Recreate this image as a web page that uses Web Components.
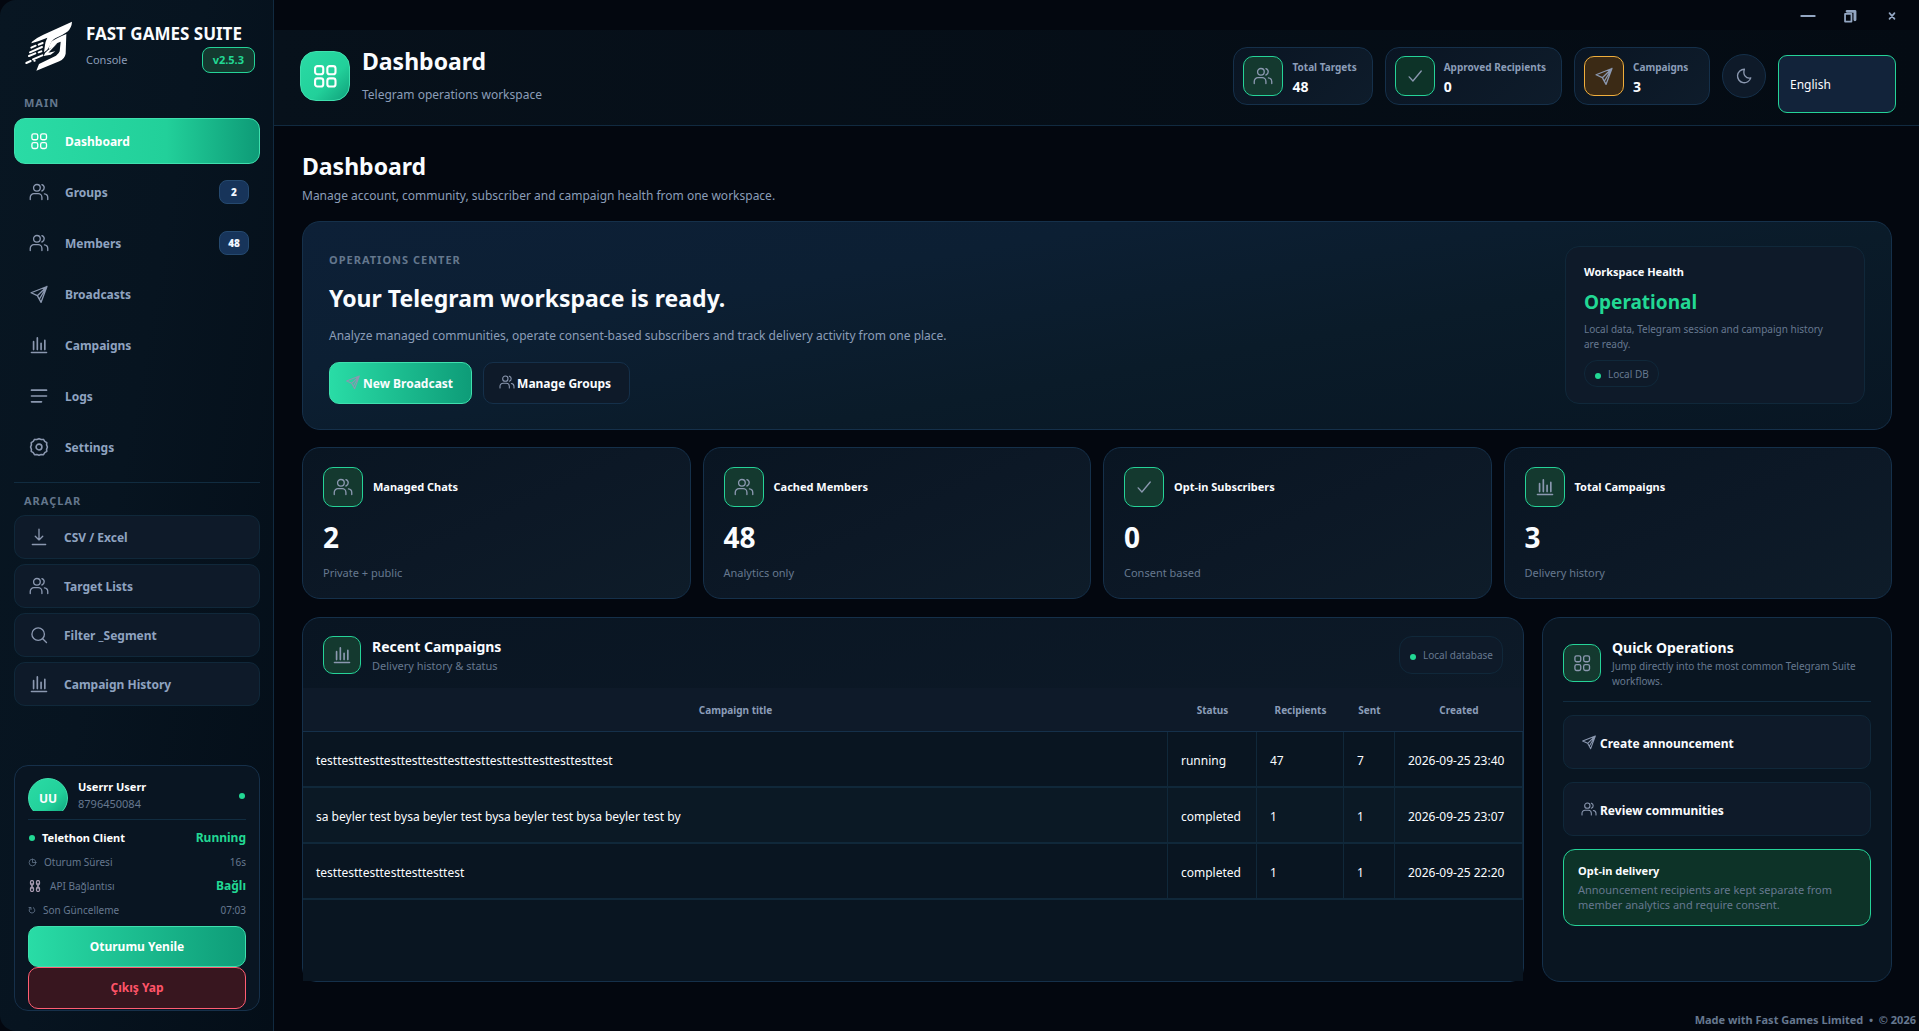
<!DOCTYPE html>
<html lang="en">
<head>
<meta charset="utf-8">
<meta name="viewport" content="width=device-width, initial-scale=1">
<title>Fast Games Suite – Dashboard</title>
<style>
:root{
  --bg:#03070f; --line:#15304a; --line-soft:#10283a; --panel:#0e1a29;
  --green:#22d894; --green-line:#25d398; --green-bg:#14392f; --text:#fafcff; --muted:#8b9db8; --dim:#66788f;
  --grad:linear-gradient(90deg,#29dca6 0%,#0e9c78 100%);
}
html,body{margin:0;background:var(--bg);color:var(--text);font:12px/16px "Noto Sans","Open Sans",sans-serif}
</style>
</head>
<body>
<suite-app></suite-app>
<script>
const ICONS={
 grid:'<rect x="3.5" y="3.5" width="7" height="7" rx="2"/><rect x="14" y="3.5" width="7" height="7" rx="2"/><rect x="3.5" y="14" width="7" height="7" rx="2"/><rect x="14" y="14" width="7" height="7" rx="2"/>',
 users:'<path d="M1.5 21v-2.5a4.5 4.5 0 0 1 4.500-4.500h5a4.500 4.500 0 0 1 4.500 4.500V21"/><circle cx="9.500" cy="7" r="4"/><path d="M15.500 3.200a4 4 0 0 1 0 7.600M18.500 14.300a4.500 4.500 0 0 1 4 4.400V21"/>',
 send:'<path d="M21.500 3 2.500 10.500l7.500 3.500 4.500 8zM21.500 3 10 14M21.500 3l-9 15"/>',
 bars:'<path d="M3 21h18" stroke-width="2"/><path d="M5.500 17.500V8M10 17.500V3.500M14.500 17.500V10M19 17.500V6.500" stroke-width="2"/>',
 lines:'<path d="M3 5h18M3 12h18M3 19h12" stroke-width="2"/>',
 gear:'<path d="M12 2l2.600 1.100 2.800-.2 1.500 2.400 2.400 1.500-.2 2.700 1 2.500-1 2.600.2 2.700-2.400 1.500-1.500 2.400-2.800-.2L12 22l-2.600-1-2.800.2-1.500-2.400-2.400-1.500.2-2.700-1-2.600 1-2.500-.2-2.700 2.400-1.500 1.500-2.400 2.800.2z" stroke-width="1.900"/><circle cx="12" cy="12" r="3.500" stroke-width="1.900"/>',
 download:'<path d="M12 2.500v13M7.500 11l4.500 4.500 4.500-4.500M4 21h16"/>',
 search:'<circle cx="11" cy="11" r="7.500"/><path d="M16.500 16.500l4.500 4.500"/>',
 check:'<path d="M5 13l4.500 5L19.500 6"/>',
 moon:'<path d="M12.500 3a9 9 0 1 0 8.500 11.500c-6 1.500-11-4-8.500-11.500z"/>',
 clock:'<circle cx="12" cy="12" r="9"/><path d="M12 3v9h9"/>',
 chain:'<rect x="3" y="1" width="6" height="9" rx="3"/><rect x="3" y="14" width="6" height="9" rx="3"/><rect x="15" y="1" width="6" height="9" rx="3"/><rect x="15" y="14" width="6" height="9" rx="3"/><path d="M6 7v10M18 7v10" stroke-width="3"/>',
 refresh:'<path d="M16 5a8.500 8.500 0 1 1-9 .5M3 4.500h6v6"/>',
 min:'<path d="M2 12h20" stroke-width="3"/>',
 restore:'<path d="M3.500 8.500h11v13h-11z" stroke-width="3"/><path d="M7 4h13.500v14.500" stroke-width="5"/>',
 close:'<path d="M6 5l12 14M18 5L6 19" stroke-width="4"/>'
};
class Base extends HTMLElement{
  constructor(){super();this.attachShadow({mode:'open'});}
  connectedCallback(){this.shadowRoot.innerHTML='<style>*{box-sizing:border-box}button,select{font:inherit;color:inherit;margin:0}h1,h2,h3,p{margin:0}'+this.css()+'</style>'+this.html();}
  at(n){return this.getAttribute(n)||'';}
  css(){return '';}
  html(){return '<slot></slot>';}
}
const def=(n,c)=>customElements.define(n,c);

def('ui-icon',class extends Base{
  css(){const s=this.at('size')||18;return `:host{display:inline-flex;flex:none;color:#8b98b0}svg{display:block;width:${s}px;height:${s}px}`;}
  html(){return `<svg viewBox="0 0 24 24" fill="none" stroke="currentColor" stroke-width="${this.at('stroke')||1.6}" stroke-linecap="round" stroke-linejoin="round" aria-hidden="true">${ICONS[this.at('name')]}</svg>`;}
});
def('brand-logo',class extends Base{
  css(){return ':host{display:block;flex:none}svg{display:block;width:48px;height:50px}';}
  html(){return `<svg viewBox="72 62 144 150" fill="#fff" stroke="#fff" aria-hidden="true">
  <path stroke="none" d="M216 64 L130 103 Q108 113 96 124 L94 129 Q118 122 142 112 Q136 124 135 134 L132 156 Q143 150 149 137 Q154 121 166 114 Q188 104 202 94 Q215 83 216 64Z"/>
  <path stroke="none" d="M199 101 Q168 114 156 123 Q149 130 146 147 L160 140 L172 128 L182 124 L179 153 Q177 160 168 166 L117 191 L109 211 L178 183 Q194 176 197 160Z"/>
  <path stroke="none" d="M172 129 L144 150 Q134 157 131 167 L152 163 L166 153 L145 157Z"/>
  <g fill="none" stroke-width="6" stroke-linecap="round"><path d="M94 142l13-6M116 133l12-5M90 156l36-16M87 167l19-8M116 156l8-3M99 177l28-12M79 188l13-6"/><path d="M103 181h1"/></g></svg>`;}
});
def('icon-tile',class extends Base{
  css(){return `:host{display:flex;flex:none;align-items:center;justify-content:center;box-sizing:border-box;width:40px;height:40px;border:1px solid var(--green-line);border-radius:10px;background:var(--green-bg)}
  :host([tone=deep]){background:#0d3328}
  :host([tone=amber]){background:#3b2a15;border-color:#f0ae3c}
  :host([size=sm]){width:38px;height:38px}
  :host([size=lg]){width:50px;height:50px;border-radius:16px;border-color:#3fe0ae;background:linear-gradient(135deg,#2adba5 0%,#22d09a 60%,#0fa07a 100%)}
  :host([size=lg]) ui-icon{color:#fff}`;}
  html(){const l=this.at('size')=='lg';return `<ui-icon name="${this.at('icon')}" size="${l?28:20}" stroke="${l?1.8:1.6}"></ui-icon>`;}
});
def('nav-item',class extends Base{
  css(){return `:host{display:block}
  a{display:flex;align-items:center;height:46px;padding:0 10px 0 14px;gap:16px;border:1px solid transparent;border-radius:11px;color:#8fa3c0;font-weight:700;font-size:12px;text-decoration:none}
  span{flex:1;padding-top:2px}
  b{display:flex;align-items:center;justify-content:center;width:30px;height:24px;border:1px solid #25496f;border-radius:8px;background:#17345a;color:#f0f6ff;font-size:10px;line-height:14px}
  :host([active]) a{background:linear-gradient(90deg,#2adba5 0%,#22d09a 62%,#0e9b77 100%);border-color:#3fe0ae;color:#fff}
  :host([active]) ui-icon{color:#fff}
  :host([tool]) a{height:44px;gap:15px;border-color:var(--line-soft);background:#0e1a29}`;}
  html(){return `<a href="#"><ui-icon name="${this.at('icon')}" size="20"></ui-icon><span><slot></slot></span>${this.at('count')?`<b>${this.at('count')}</b>`:''}</a>`;}
});
def('account-card',class extends Base{
  css(){return `:host{display:block;border:1px solid #16304a;border-radius:14px;padding:12px 13px 1px;background:#091522}
  .who{display:flex;gap:10px;height:33px;align-items:center}
  .av{height:33px;overflow:hidden}
  .av span{display:flex;justify-content:center;align-items:center;box-sizing:border-box;width:40px;height:40px;padding-top:2px;border-radius:50%;border:1px solid #3fe0ae;background:linear-gradient(135deg,#2adba5 0%,#22d09a 60%,#0fa07a 100%);font-weight:700;font-size:12px}
  .id{flex:1;font-size:11px;line-height:17px;color:var(--dim)}.id b{display:block;color:#fff}
  .dot{width:6px;height:6px;border-radius:50%;background:var(--green)}
  .who .dot{margin-right:1px;margin-top:3px}
  ul{list-style:none;margin:8px 0 4px;padding:6px 0 0;border-top:1px solid #112c40}
  li{display:flex;align-items:center;height:24px;gap:7px;color:var(--dim);font-size:10px}
  li span{flex:1}
  li .dot{margin-left:1px}
  li b{font-size:12px;color:var(--green)}li strong{flex:1;color:#fff;font-size:11px}
  ui-icon{color:#66788f}
  .chain{color:#a89ab0;margin:0 2px 0 1px}
  button{display:block;width:100%;height:41px;border-radius:10px;font-weight:700;font-size:12px}
  .renew{border:1px solid #3fe0ae;background:var(--grad);color:#fff}
  .out{height:42px;border:1px solid #ff5d72;background:#38161f;color:#ff5468}`;}
  html(){return `<div class="who"><div class="av"><span>UU</span></div><div class="id"><b>Userrr Userr</b>8796450084</div><i class="dot"></i></div>
  <ul><li><i class="dot"></i><strong>Telethon Client</strong><b>Running</b></li>
  <li><ui-icon name="clock" size="9" stroke="2"></ui-icon><span>Oturum Süresi</span>16s</li>
  <li><ui-icon class="chain" name="chain" size="12" stroke="2.5"></ui-icon><span>API Bağlantısı</span><b>Bağlı</b></li>
  <li><ui-icon name="refresh" size="8" stroke="2.5"></ui-icon><span>Son Güncelleme</span>07:03</li></ul>
  <button class="renew">Oturumu Yenile</button><button class="out">Çıkış Yap</button>`;}
});
def('side-bar',class extends Base{
  css(){return `:host{display:flex;flex-direction:column;width:274px;flex:none;box-sizing:border-box;padding:20px 13px 20px 14px;border-right:1px solid #112a40;border-radius:16px 0 0 16px;background:linear-gradient(100deg,#081622 0%,#071420 45%,#040e18 100%)}
  header{display:flex;gap:14px;padding:1px 5px 0 10px;height:53px}
  .t{flex:1}h2{font-size:17px;line-height:14px;margin-top:6px;font-weight:700;white-space:nowrap}
  .s{display:flex;justify-content:space-between;align-items:center;height:26px;margin-top:6px;font-size:11px;color:var(--muted)}
  .s b{display:flex;align-items:center;height:26px;padding:0 10px;border:1px solid var(--green-line);border-radius:8px;background:var(--green-bg);color:var(--green);font-size:11px}
  h3{margin:0 10px;font-size:11px;line-height:16px;letter-spacing:1px;color:#64778d}
  nav{display:flex;flex-direction:column;gap:5px}
  .m{margin:22px 10px 7px}.a{margin:10px 10px 6px}
  hr{width:100%;margin:12px 0 0;border:0;border-top:1px solid #112c40}
  account-card{margin-top:auto}`;}
  html(){return `<header><brand-logo></brand-logo><div class="t"><h2>FAST GAMES SUITE</h2><div class="s"><span>Console</span><b>v2.5.3</b></div></div></header>
  <h3 class="m">MAIN</h3>
  <nav aria-label="Main"><nav-item icon="grid" active>Dashboard</nav-item><nav-item icon="users" count="2">Groups</nav-item><nav-item icon="users" count="48">Members</nav-item><nav-item icon="send">Broadcasts</nav-item><nav-item icon="bars">Campaigns</nav-item><nav-item icon="lines">Logs</nav-item><nav-item icon="gear">Settings</nav-item></nav>
  <hr><h3 class="a">ARAÇLAR</h3>
  <nav aria-label="Araçlar"><nav-item tool icon="download">CSV / Excel</nav-item><nav-item tool icon="users">Target Lists</nav-item><nav-item tool icon="search">Filter _Segment</nav-item><nav-item tool icon="bars">Campaign History</nav-item></nav>
  <account-card></account-card>`;}
});
def('window-controls',class extends Base{
  css(){return `:host{display:flex;justify-content:flex-end;height:30px;padding-right:6px}
  button{display:flex;align-items:center;justify-content:center;width:42px;height:32px;padding:0;border:0;background:none}ui-icon{color:#93a6c2}`;}
  html(){return `<button aria-label="Minimize"><ui-icon name="min" size="16"></ui-icon></button><button aria-label="Restore"><ui-icon name="restore" size="14"></ui-icon></button><button aria-label="Close"><ui-icon name="close" size="10"></ui-icon></button>`;}
});
def('stat-chip',class extends Base{
  css(){return `:host{display:flex;align-items:center;gap:9px;min-width:136px;height:58px;box-sizing:border-box;padding:0 15px 0 9px;border:1px solid var(--line);border-radius:14px;background:linear-gradient(135deg,#0a1523,#0e1c2b)}
  div{padding-top:3px}
  span{display:block;font-size:10px;line-height:16px;font-weight:700;color:var(--muted);white-space:nowrap}b{display:block;font-size:14px;line-height:20px;margin-top:2px}`;}
  html(){return `<icon-tile icon="${this.at('icon')}" tone="${this.at('tone')}"></icon-tile><div><span>${this.at('label')}</span><b>${this.at('value')}</b></div>`;}
});
def('top-bar',class extends Base{
  css(){return `:host{display:flex;justify-content:space-between;height:96px;box-sizing:border-box;padding:17px 23px 12px 26px;border-bottom:1px solid #112a40;background:linear-gradient(90deg,#07111b,#040b13)}
  .l,.r{display:flex;gap:12px}.l{align-items:center;height:58px}
  h2{font-size:23px;line-height:28px}p{margin-top:10px;font-size:12px;line-height:20px;color:var(--muted)}
  .moon{display:flex;align-items:center;justify-content:center;width:44px;height:44px;margin-top:7px;padding:0;border:1px solid var(--line);border-radius:50%;background:#0e1a29}
  select{appearance:none;align-self:flex-end;width:118px;height:58px;padding:2px 11px 0;border:1px solid var(--green-line);border-radius:9px;background:#12233a;font-size:12px}`;}
  html(){return `<div class="l"><icon-tile size="lg" icon="grid"></icon-tile><div><h2>Dashboard</h2><p>Telegram operations workspace</p></div></div>
  <div class="r"><stat-chip icon="users" label="Total Targets" value="48"></stat-chip><stat-chip icon="check" tone="deep" label="Approved Recipients" value="0"></stat-chip><stat-chip icon="send" tone="amber" label="Campaigns" value="3"></stat-chip>
  <button class="moon" aria-label="Toggle theme"><ui-icon name="moon" size="18" stroke="1.8"></ui-icon></button><select aria-label="Language"><option>English</option></select></div>`;}
});
def('pill-tag',class extends Base{
  css(){return `:host{display:inline-flex;align-items:center;gap:7px;height:27px;box-sizing:border-box;padding:0 9px 0 10px;border:1px solid var(--line-soft);border-radius:13px;background:#0e1a29;color:var(--dim);font-size:10px;white-space:nowrap}
  :host([tall]){height:38px}
  i{width:6px;height:6px;margin-top:4px;border-radius:50%;background:var(--green)}`;}
  html(){return '<i></i><slot></slot>';}
});
def('hero-panel',class extends Base{
  css(){return `:host{display:flex;justify-content:space-between;box-sizing:border-box;min-height:209px;padding:24px 26px 24px;border:1px solid var(--line);border-radius:18px;background:linear-gradient(170deg,#0d2037 0%,#0c1f33 30%,#0a1b29 60%,#081623 100%)}
  .k{margin-top:6px;font-size:11px;line-height:16px;font-weight:700;letter-spacing:1px;color:#64778d}
  h2{margin-top:15px;font-size:23px;line-height:30px}
  .d{margin-top:14px;font-size:12px;line-height:18px;color:var(--muted)}
  .b{display:flex;gap:11px;margin-top:17px}
  button{display:flex;align-items:center;height:42px;padding:2px 18px 0 15px;gap:2px;border:1px solid var(--line);border-radius:10px;background:#0e1a29;font-size:12px;font-weight:700}
  button ui-icon{margin-top:-4px}
  .p{border-color:#3fe0ae;background:var(--grad)}
  aside{width:300px;height:158px;padding:16px 18px;border:1px solid var(--line-soft);border-radius:14px;background:#0e1a29}
  aside h3{font-size:11px;line-height:18px}aside strong{display:block;margin-top:8px;font-size:19px;line-height:26px;color:var(--green)}
  aside p{margin:7px 0 8px;padding-right:12px;font-size:10px;line-height:15px;color:var(--dim)}`;}
  html(){return `<div><p class="k">OPERATIONS CENTER</p><h2>Your Telegram workspace is ready.</h2><p class="d">Analyze managed communities, operate consent-based subscribers and track delivery activity from one place.</p>
  <div class="b"><button class="p"><ui-icon name="send" size="16"></ui-icon>New Broadcast</button><button><ui-icon name="users" size="16"></ui-icon>Manage Groups</button></div></div>
  <aside><h3>Workspace Health</h3><strong>Operational</strong><p>Local data, Telegram session and campaign history are ready.</p><pill-tag>Local DB</pill-tag></aside>`;}
});
def('metric-card',class extends Base{
  css(){return `:host{display:block;flex:1;box-sizing:border-box;height:152px;padding:19px 20px;border:1px solid var(--line);border-radius:18px;background:linear-gradient(155deg,#091522 0%,#0c1826 50%,#0e1c29 100%)}
  .h{display:flex;align-items:center;gap:10px;font-size:11px;font-weight:700}b{display:block;margin-top:12px;font-size:28px;line-height:36px}p{margin-top:10px;font-size:11px;line-height:16px;color:var(--dim)}`;}
  html(){return `<div class="h"><icon-tile icon="${this.at('icon')}"></icon-tile>${this.at('label')}</div><b>${this.at('value')}</b><p>${this.at('note')}</p>`;}
});
def('campaign-table',class extends Base{
  css(){return `:host{display:flex;flex-direction:column;flex:1;min-width:0;box-sizing:border-box;border:1px solid var(--line);border-radius:18px 18px 14px 14px;background:linear-gradient(165deg,#091522,#0d1a28 60%)}
  header{display:flex;align-items:center;gap:11px;padding:18px 20px 14px}header div{flex:1}
  h3{font-size:14px;line-height:22px}p{font-size:11px;line-height:16px;color:var(--dim)}
  .w{flex:1;background:#091521}
  table{width:100%;border-collapse:separate;border-spacing:0}
  th{height:44px;padding:0 12px;font-size:10px;font-weight:700;color:var(--muted);background:#0e1a29;border-bottom:1px solid var(--line)}
  td{height:56px;padding:3px 13px 0;font-size:12px;white-space:nowrap;border-right:1px solid #10283a;border-bottom:2px solid #10283a}
  tbody tr:nth-child(2){background:#0b1925}
  .c2{width:89px}.c3{width:87px}.c4{width:51px}.c5{width:128px}`;}
  html(){const rows=[['testtesttesttesttesttesttesttesttesttesttesttesttesttest','running',47,7,'2026-09-25 23:40'],['sa beyler test bysa beyler test bysa beyler test bysa beyler test by','completed',1,1,'2026-09-25 23:07'],['testtesttesttesttesttesttest','completed',1,1,'2026-09-25 22:20']];
  return `<header><icon-tile size="sm" icon="bars"></icon-tile><div><h3>Recent Campaigns</h3><p>Delivery history &amp; status</p></div><pill-tag tall>Local database</pill-tag></header>
  <div class="w"><table><thead><tr><th>Campaign title</th><th class="c2">Status</th><th class="c3">Recipients</th><th class="c4">Sent</th><th class="c5">Created</th></tr></thead><tbody>${rows.map(r=>'<tr>'+r.map(c=>`<td>${c}</td>`).join('')+'</tr>').join('')}</tbody></table></div>`;}
});
def('quick-operations',class extends Base{
  css(){return `:host{display:flex;flex-direction:column;width:350px;flex:none;box-sizing:border-box;padding:19px 20px;border:1px solid var(--line);border-radius:18px;background:#091521}
  header{display:flex;align-items:center;gap:11px;padding-bottom:12px;border-bottom:1px solid #112c40}
  h3{font-size:14px;line-height:22px}p{font-size:11px;line-height:15px;color:var(--dim)}header p{font-size:10px}
  button{display:flex;align-items:center;gap:3px;height:54px;margin-top:13px;padding:4px 17px 0;border:1px solid var(--line-soft);border-radius:10px;background:#0e1a29;font-size:12px;font-weight:700}
  button ui-icon{margin-top:-5px}
  section{margin-top:13px;height:77px;padding:13px 14px;border:1px solid var(--green-line);border-radius:12px;background:#0d3328}
  section b{display:block;font-size:11px;line-height:16px;margin-bottom:3px}`;}
  html(){return `<header><icon-tile size="sm" icon="grid"></icon-tile><div><h3>Quick Operations</h3><p>Jump directly into the most common Telegram Suite workflows.</p></div></header>
  <button><ui-icon name="send" size="16"></ui-icon>Create announcement</button><button><ui-icon name="users" size="16"></ui-icon>Review communities</button>
  <section><b>Opt-in delivery</b><p>Announcement recipients are kept separate from member analytics and require consent.</p></section>`;}
});
def('suite-app',class extends Base{
  css(){return `:host{display:flex;min-height:100vh}
  .main{display:flex;flex-direction:column;flex:1;min-width:0}
  main{display:flex;flex-direction:column;flex:1;padding:25px 27px 0 28px}
  h1{font-size:23px;line-height:30px}.sub{margin:5px 0 16px;font-size:12px;line-height:19px;color:var(--muted)}
  .cards{display:flex;gap:12px;margin:17px 0 18px}.row{display:flex;gap:18px;flex:1}
  footer{height:49px;padding:30px 3px 0;text-align:right;font-size:11px;font-weight:700;color:#66788f;white-space:pre}`;}
  html(){return `<side-bar></side-bar><div class="main"><window-controls></window-controls><top-bar></top-bar>
  <main><h1>Dashboard</h1><p class="sub">Manage account, community, subscriber and campaign health from one workspace.</p>
  <hero-panel></hero-panel>
  <div class="cards"><metric-card icon="users" label="Managed Chats" value="2" note="Private + public"></metric-card><metric-card icon="users" label="Cached Members" value="48" note="Analytics only"></metric-card><metric-card icon="check" label="Opt-in Subscribers" value="0" note="Consent based"></metric-card><metric-card icon="bars" label="Total Campaigns" value="3" note="Delivery history"></metric-card></div>
  <div class="row"><campaign-table></campaign-table><quick-operations></quick-operations></div></main>
  <footer>Made with Fast Games Limited  •  © 2026</footer></div>`;}
});
</script>
</body>
</html>
